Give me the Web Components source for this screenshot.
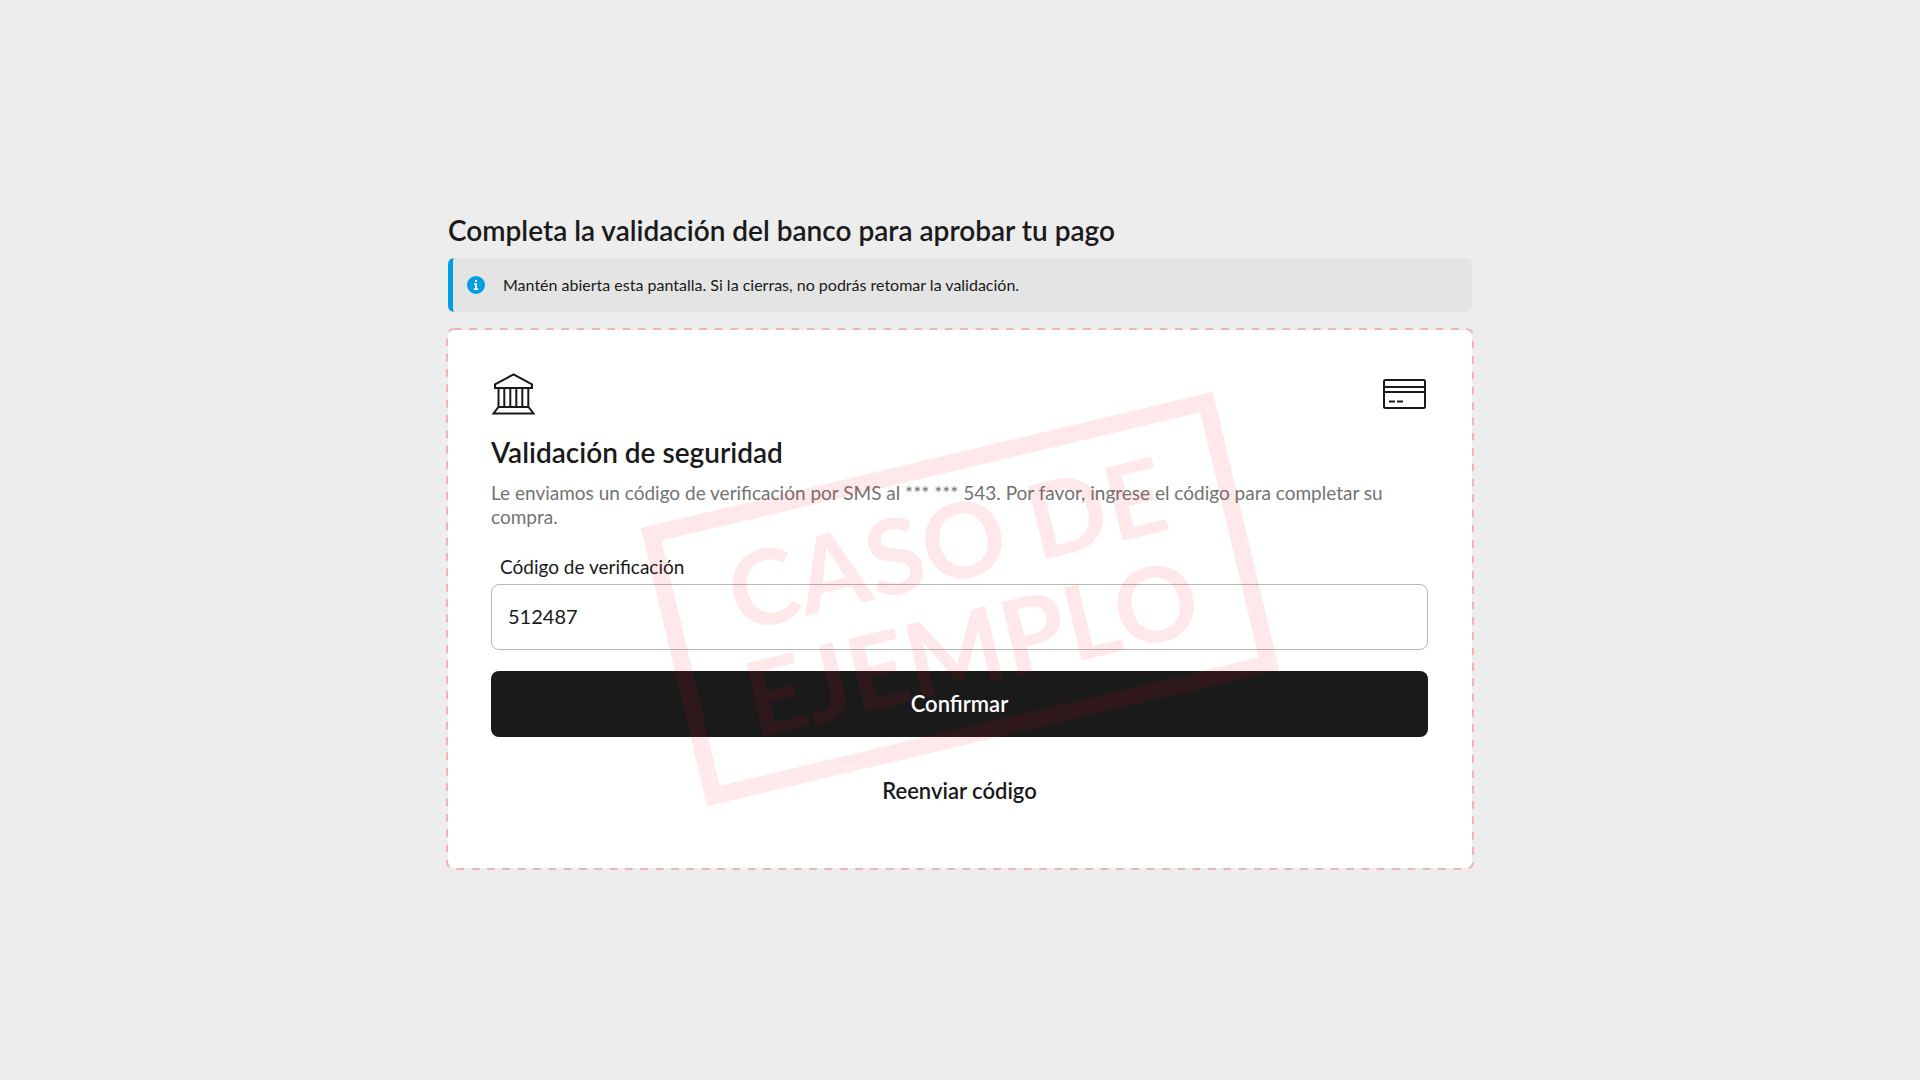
<!DOCTYPE html>
<html lang="es">
<head>
<meta charset="utf-8">
<title>Validación del banco</title>
<style>
  body { margin: 0; background: #ededed; color: #1a1a1a; font-family: Lato, "Open Sans", sans-serif; }
</style>
</head>
<body>
<payment-page>
  <span slot="title">Completa la validación del banco para aprobar tu pago</span>
  <info-banner>Mantén abierta esta pantalla. Si la cierras, no podrás retomar la validación.</info-banner>
  <validation-card>
    <bank-icon slot="brand"></bank-icon>
    <credit-card-icon slot="brand"></credit-card-icon>
    <span slot="heading">Validación de seguridad</span>
    <span slot="description">Le enviamos un código de verificación por SMS al *** *** 543. Por favor, ingrese el código para completar su compra.</span>
    <code-field label="Código de verificación" value="512487"></code-field>
    <action-button>Confirmar</action-button>
    <action-button variant="plain">Reenviar código</action-button>
    <sample-stamp slot="stamp"><span>CASO DE</span><span>EJEMPLO</span></sample-stamp>
  </validation-card>
</payment-page>

<script>
const define = (name, html, setup) => {
  const template = document.createElement('template');
  template.innerHTML = html;
  customElements.define(name, class extends HTMLElement {
    constructor() {
      super();
      this.attachShadow({ mode: 'open' }).append(template.content.cloneNode(true));
    }
    connectedCallback() { if (setup) setup(this, this.shadowRoot); }
  });
};

define('payment-page', `
  <style>
    :host { display: flex; min-height: 100vh; align-items: center; justify-content: center; }
    main { display: flex; flex-direction: column; gap: 18px; width: 100%; max-width: 1024px; }
    h1 { margin: 0 0 -8px; font-size: 28px; line-height: 36px; font-weight: 600; }
  </style>
  <main><h1><slot name="title"></slot></h1><slot></slot></main>`);

define('info-banner', `
  <style>
    :host { display: flex; align-items: center; gap: 18px; box-sizing: border-box; height: 54px;
      padding: 0 14px; border-left: 5px solid #009ee3; border-radius: 6px; background: #e4e4e4;
      font-size: 16px; line-height: 24px; }
    svg { width: 18px; height: 18px; flex: none; }
  </style>
  <svg viewBox="0 0 18 18" aria-hidden="true">
    <circle cx="9" cy="9" r="9" fill="#009ee3"/>
    <path d="M8 4h2v2H8zM7 7.3h3v5.2h1.4v1.4H6.6v-1.4H8V8.7H7z" fill="#fff"/>
  </svg>
  <span><slot></slot></span>`);

define('bank-icon', `
  <style>:host { display: block; } svg { display: block; }</style>
  <svg width="45" height="42" viewBox="-1 0 45 42" fill="none" stroke="#1a1a1a" stroke-width="2" aria-hidden="true">
    <path d="M21.5 1.4 40 11.3V15H3v-3.7zM6.500 15v19M12.300 15v19M18.300 15v19M24.300 15v19M30.300 15v19M36.300 15v19M6.500 34h30l5 6.500H1.500z"/>
  </svg>`);

define('credit-card-icon', `
  <style>:host { display: block; } svg { display: block; }</style>
  <svg width="43" height="30" viewBox="0 0 43 30" fill="none" stroke="#1a1a1a" stroke-width="2" aria-hidden="true">
    <rect x="1" y="1" width="41" height="28" rx="1.500"/>
    <path d="M1 8h41M1 13h41M6 22.500h6M14 22.500h6"/>
  </svg>`);

define('validation-card', `
  <style>
    :host { display: block; position: relative; box-sizing: border-box; padding: 43px 44px 44px 43px;
      border-radius: 7px; background: #fff; }
    .outline { position: absolute; inset: -2px; width: calc(100% + 4px); height: calc(100% + 4px);
      overflow: visible; pointer-events: none; }
    .outline rect { x: 1px; y: 1px; width: calc(100% - 2px); height: calc(100% - 2px); }
    .brands { display: flex; align-items: center; justify-content: space-between; height: 42px; margin-right: 2px; }
    h2 { margin: 20px 0 12px; font-size: 28px; line-height: 34px; font-weight: 600; }
    p { margin: 0 0 26px; font-size: 19px; line-height: 24px; color: #737373; }
    form { display: flex; flex-direction: column; gap: 21px; }
  </style>
  <svg class="outline" aria-hidden="true"><rect rx="7" fill="none" stroke="#f3b3b5" stroke-width="2" stroke-dasharray="7.670 7.670"/></svg>
  <div class="brands"><slot name="brand"></slot></div>
  <h2><slot name="heading"></slot></h2>
  <p><slot name="description"></slot></p>
  <form><slot></slot></form>
  <slot name="stamp"></slot>`);

define('code-field', `
  <style>
    :host { display: flex; flex-direction: column; gap: 5px; }
    label { padding: 0 9px; font-size: 19px; line-height: 24px; }
    input { box-sizing: border-box; width: 100%; height: 66px; padding: 0 16px 2px; margin: 0;
      border: 1px solid #b8b8b8; border-radius: 8px; outline: 0; background: #fff; color: inherit;
      font: 400 20px/24px Lato, "Open Sans", sans-serif; }
  </style>
  <label for="code"></label>
  <input id="code" type="text" inputmode="numeric" autocomplete="one-time-code">`,
  (host, root) => {
    root.querySelector('label').textContent = host.getAttribute('label');
    root.querySelector('input').value = host.getAttribute('value');
  });

define('action-button', `
  <style>
    :host { display: block; }
    button { display: block; box-sizing: border-box; width: 100%; height: 66px; padding: 0 16px; margin: 0;
      border: 0; border-radius: 8px; background: #1a1a1a; color: #fff; cursor: pointer;
      font: 600 22px/26px Lato, "Open Sans", sans-serif; }
    :host([variant="plain"]) button { background: none; color: #1a1a1a; }
  </style>
  <button type="button"><slot></slot></button>`);

define('sample-stamp', `
  <style>
    :host { position: absolute; inset: 0; display: flex; align-items: center; justify-content: center;
      pointer-events: none; }
    div { box-sizing: border-box; display: flex; flex-direction: column; align-items: center; justify-content: center;
      width: 588px; height: 286px; padding-bottom: 12px; border: 17px solid; opacity: .085; color: #ff0a14;
      font-size: 104px; line-height: 107px; font-weight: 700; transform: rotate(-13.400deg); }
  </style>
  <div><slot></slot></div>`);
</script>
</body>
</html>
